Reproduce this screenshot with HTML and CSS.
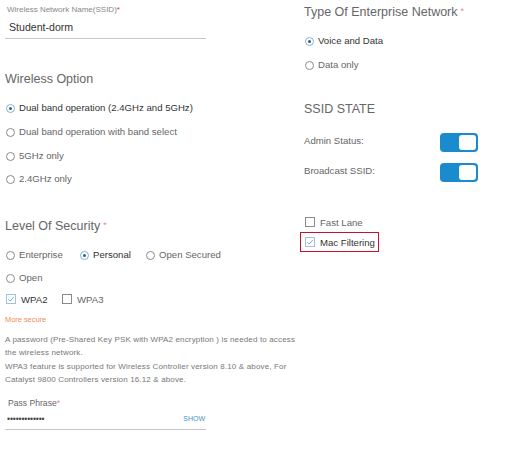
FILE: index.html
```html
<!DOCTYPE html>
<html>
<head>
<meta charset="utf-8">
<link rel="stylesheet" href="styles.css">
</head>
<body>
<div class="page">
  <div class="col left">
    <div class="field-label">Wireless Network Name(SSID)<span class="req">*</span></div>
    <div class="input ssid">Student-dorm</div>

    <div class="heading h-wireless">Wireless Option</div>
    <div class="radio-list">
      <div class="opt selected"><span class="radio on"></span>Dual band operation (2.4GHz and 5GHz)</div>
      <div class="opt"><span class="radio"></span>Dual band operation with band select</div>
      <div class="opt"><span class="radio"></span>5GHz only</div>
      <div class="opt"><span class="radio"></span>2.4GHz only</div>
    </div>

    <div class="heading h-security">Level Of Security<span class="req-s">*</span></div>
    <div class="sec-row">
      <div class="opt w-ent"><span class="radio"></span>Enterprise</div>
      <div class="opt selected w-per"><span class="radio on"></span>Personal</div>
      <div class="opt"><span class="radio"></span>Open Secured</div>
    </div>
    <div class="sec-row">
      <div class="opt"><span class="radio"></span>Open</div>
    </div>
    <div class="chk-row">
      <div class="opt selected w-wpa2"><span class="check on"><svg viewBox="0 0 10 10" width="10" height="10"><path d="M2.3 5.2 L4.2 7 L7.8 3" fill="none" stroke="#6a9fc8" stroke-width="0.9"/></svg></span>WPA2</div>
      <div class="opt"><span class="check"></span>WPA3</div>
    </div>
    <div class="more">More secure</div>
    <p class="note">A password (Pre-Shared Key PSK with WPA2 encryption ) is needed to access<br>the wireless network.<br>WPA3 feature is supported for Wireless Controller version 8.10 &amp; above, For<br>Catalyst 9800 Controllers version 16.12 &amp; above.</p>

    <div class="field-label pass-label">Pass Phrase<span class="req-p">*</span></div>
    <div class="input pass"><span class="dots">•••••••••••••</span><span class="show">SHOW</span></div>
  </div>

  <div class="col right">
    <div class="heading">Type Of Enterprise Network<span class="req-s">*</span></div>
    <div class="radio-list r-type">
      <div class="opt selected"><span class="radio on"></span>Voice and Data</div>
      <div class="opt"><span class="radio"></span>Data only</div>
    </div>

    <div class="heading h-state">SSID STATE</div>
    <div class="toggle-row"><span class="t-label">Admin Status:</span><span class="toggle"><span class="knob"></span></span></div>
    <div class="toggle-row"><span class="t-label">Broadcast SSID:</span><span class="toggle"><span class="knob"></span></span></div>

    <div class="cb-list">
      <div class="opt"><span class="check"></span>Fast Lane</div>
      <div class="opt selected mac"><span class="check on"><svg viewBox="0 0 10 10" width="10" height="10"><path d="M2.3 5.2 L4.2 7 L7.8 3" fill="none" stroke="#6a9fc8" stroke-width="0.9"/></svg></span>Mac Filtering</div>
    </div>
  </div>
</div>
</body>
</html>
```

FILE: styles.css
```css
* { box-sizing: border-box; }
html, body { margin: 0; padding: 0; background: #fff; }
body {
  font-family: "Liberation Sans", Arial, sans-serif;
  color: #666;
  width: 506px;
  height: 452px;
  overflow: hidden;
}
.page {
  display: grid;
  grid-template-columns: 299px 1fr;
  padding-left: 5px;
}
.col { display: flex; flex-direction: column; }
.right { padding-top: 1px; }

.field-label {
  margin-top: 4px;
  height: 12px;
  line-height: 12px;
  font-size: 8px;
  color: #888;
  padding-left: 2px;
}
.req { color: #d33; }
.req-p { color: #e88; }
.req-s { color: #e88; font-size: 9px; margin-left: 3px; vertical-align: 2px; }

.input {
  width: 201px;
  border-bottom: 1px solid #c8c8c8;
  color: #333;
}
.ssid {
  height: 23px;
  line-height: 22px;
  font-size: 10.6px;
  padding-left: 4px;
}

.heading {
  height: 20px;
  line-height: 20px;
  font-size: 12.5px;
  color: #666;
}
.h-wireless { margin-top: 30px; }
.h-security { margin-top: 24px; }
.h-state { margin-top: 23px; }

.radio-list { margin-top: 7px; display: flex; flex-direction: column; }
.radio-list .opt { height: 23.7px; }
.r-type .opt { height: 24px; }

.opt {
  display: flex;
  align-items: center;
  font-size: 9.6px;
  color: #666;
  white-space: nowrap;
}
.opt.selected { color: #333; }

.radio {
  width: 9px;
  height: 9px;
  border: 1px solid #8a8a8a;
  border-radius: 50%;
  margin: 2px 4px 0 1px;
  flex: none;
  display: flex;
  align-items: center;
  justify-content: center;
}
.radio.on { border-color: #7fb4da; }
.radio.on::after {
  content: "";
  width: 3px;
  height: 3px;
  border-radius: 50%;
  background: #2f5f86;
}

.sec-row { display: flex; height: 23px; }
.h-security + .sec-row { margin-top: 8px; }
.w-ent { width: 74px; }
.w-per { width: 66px; }

.chk-row { display: flex; height: 21px; }
.w-wpa2 { width: 56px; }

.check {
  width: 10px;
  height: 10px;
  border: 1px solid #8a8a8a;
  margin: 0 5px 0 1px;
  flex: none;
  display: flex;
}
.check.on { border-color: #9cc3e0; }
.check svg { display: block; margin: -1px; }

.more {
  margin-top: 2px;
  height: 16px;
  line-height: 16px;
  font-size: 7.4px;
  color: #ef8a5c;
}
.note {
  margin: 5px 0 0;
  font-size: 8px;
  line-height: 13.5px;
  color: #777;
  letter-spacing: 0.15px;
  white-space: nowrap;
}

.pass-label { margin-top: 10px; padding-left: 3px; font-size: 8.6px; color: #666; }
.pass {
  height: 21px;
  display: flex;
  align-items: center;
  justify-content: space-between;
  padding: 0 1px 0 2px;
}
.dots { font-size: 8.5px; letter-spacing: -0.1px; color: #444; }
.show { font-size: 7px; color: #4a90c8; }

.toggle-row {
  width: 174px;
  height: 30px;
  display: flex;
  align-items: center;
  justify-content: space-between;
}
.h-state + .toggle-row { margin-top: 8px; }
.t-label { font-size: 9.6px; color: #666; margin-top: -4px; }
.toggle {
  width: 38px;
  height: 19px;
  border-radius: 4px;
  background: #1a8ccd;
  padding: 2px;
  display: flex;
  justify-content: flex-end;
}
.knob {
  width: 17px;
  height: 15px;
  border-radius: 3px;
  background: #fff;
}

.cb-list { margin-top: 25px; display: flex; flex-direction: column; align-items: flex-start; }
.cb-list .opt { height: 20px; }
.mac {
  border: 1.5px solid #c8102e;
  margin-left: -4px;
  padding: 0 3px 0 3px;
}
```
